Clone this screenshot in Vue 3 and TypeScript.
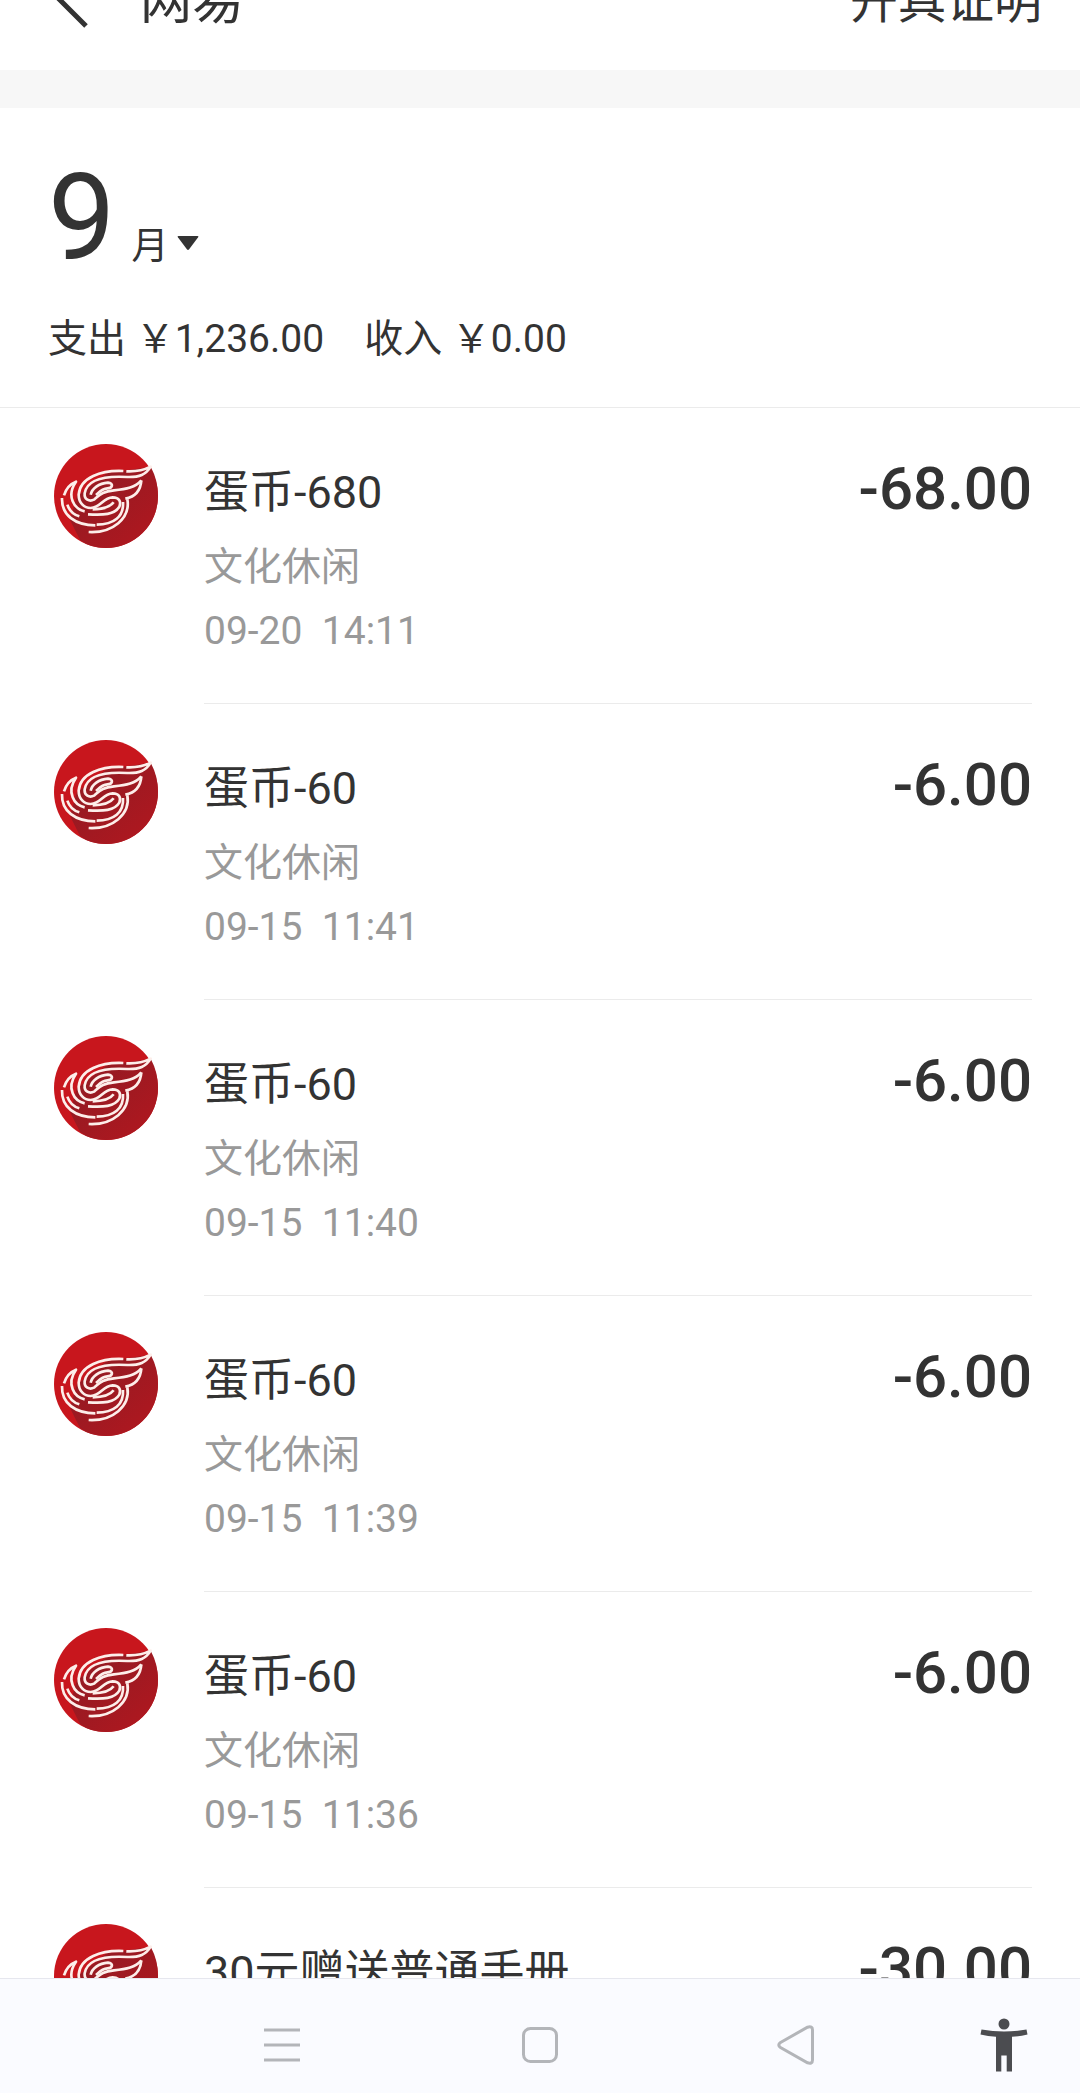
<script setup lang="ts">
interface Transaction {
  id: number
  title: string
  category: string
  time: string
  amount: string
}

const transactions: Transaction[] = [
  { id: 1, title: '蛋币-680', category: '文化休闲', time: '09-20  14:11', amount: '-68.00' },
  { id: 2, title: '蛋币-60', category: '文化休闲', time: '09-15  11:41', amount: '-6.00' },
  { id: 3, title: '蛋币-60', category: '文化休闲', time: '09-15  11:40', amount: '-6.00' },
  { id: 4, title: '蛋币-60', category: '文化休闲', time: '09-15  11:39', amount: '-6.00' },
  { id: 5, title: '蛋币-60', category: '文化休闲', time: '09-15  11:36', amount: '-6.00' },
  { id: 6, title: '30元赠送普通手册', category: '', time: '', amount: '-30.00' },
]
</script>

<template>
  <div class="screen">
    <header class="topbar">
      <button class="back" type="button" aria-label="返回">
        <svg width="34" height="60" viewBox="0 0 34 60" fill="none" stroke="#333" stroke-width="5">
          <path d="M32 2 4 30l28 28" />
        </svg>
      </button>
      <h1 class="merchant">网易</h1>
      <a class="proof" href="#">开具证明</a>
    </header>

    <section class="summary">
      <button class="month" type="button">
        <span class="month-number">9</span>
        <span class="month-unit">月</span>
        <svg class="caret" width="22" height="14" viewBox="0 0 22 14" fill="#333">
          <path d="M1.500 0h19q1.500 0 .6 1.300l-9 12q-1.100 1.200-2.200 0l-9-12Q0 0 1.500 0z" />
        </svg>
      </button>
      <p class="totals">
        <span>支出 ￥1,236.00</span>
        <span>收入 ￥0.00</span>
      </p>
    </section>

    <ul class="list">
      <li v-for="item in transactions" :key="item.id" class="row">
        <svg class="logo" width="104" height="104" viewBox="42 42 312 312" aria-hidden="true">
          <defs>
            <linearGradient :id="`shade-${item.id}`" x1="0" y1="0" x2="1" y2="1">
              <stop offset="0.3" stop-color="#981a22" />
              <stop offset="1" stop-color="#b3171f" />
            </linearGradient>
          </defs>
          <circle cx="198" cy="198" r="156" fill="#c8161d" />
          <path d="M110 200 200 130 332 110Q354 150 354 198A156 156 0 0 1 198 354Q150 354 120 330L90 270z" :fill="`url(#shade-${item.id})`" />
          <g transform="translate(54 96)" fill="none" stroke="#fdeeea" stroke-width="8" stroke-linejoin="round">
            <path d="M196 27C130 24 66 46 62 98C62 122 78 138 98 138C130 136 134 107 164 106C184 106 190 120 184 134C170 158 136 160 90 157" />
            <path d="M205 28C238 30 258 24 278 14C264 38 244 46 208 45C156 42 88 46 80 94C78 112 94 120 108 113C126 98 134 88 168 85C206 82 232 76 250 55" />
            <path d="M250 55C248 84 232 104 202 110" />
            <path d="M98 98C102 80 122 64 150 62C168 64 164 78 148 79C132 80 124 90 114 99" />
            <path d="M18 100C24 80 36 66 54 59C42 76 36 98 44 118C50 134 62 144 80 148" />
            <path d="M12 108C10 160 52 190 112 190" />
            <path d="M28 128C34 146 46 158 64 163" />
            <path d="M96 157M104 142C134 142 156 136 167 121" />
            <path d="M116 188C168 188 198 164 195 120" />
            <path d="M208 112C218 168 164 214 92 210" />
          </g>
        </svg>
        <div class="body">
          <div class="info">
            <h2 class="title">{{ item.title }}</h2>
            <p v-if="item.category" class="category">{{ item.category }}</p>
            <time v-if="item.time" class="time">{{ item.time }}</time>
          </div>
          <strong class="amount">{{ item.amount }}</strong>
        </div>
      </li>
    </ul>

    <nav class="navbar">
      <button type="button" aria-label="菜单">
        <svg width="36" height="36" viewBox="0 0 36 36" fill="none" stroke="#b3b5b9" stroke-width="3">
          <path d="M0 3h36M0 18h36M0 33h36" />
        </svg>
      </button>
      <button type="button" aria-label="主页">
        <svg width="36" height="36" viewBox="0 0 36 36" fill="none" stroke="#b3b5b9" stroke-width="3">
          <rect x="1.500" y="1.500" width="33" height="33" rx="7" />
        </svg>
      </button>
      <button type="button" aria-label="后退">
        <svg width="38" height="40" viewBox="0 0 38 40" fill="none" stroke="#b3b5b9" stroke-width="3">
          <path d="M3.500 17.500 30.500 2.200Q35.500.6 35.500 5v30q0 4.400-5 2.800L3.500 22.500q-3.500-2.500 0-5z" />
        </svg>
      </button>
      <button class="assist" type="button" aria-label="无障碍">
        <svg width="48" height="54" viewBox="0 0 48 54" fill="#4b4c50">
          <circle cx="24" cy="6" r="5.500" />
          <path d="M1.500 11.500Q24 15.500 46.500 11.500l1 5Q40 18.300 32 18.800V53.500h-5.300V37.500h-5.400v16H16V18.800Q8 18.300.5 16.500z" />
        </svg>
      </button>
    </nav>
  </div>
</template>

<style>
body {
  margin: 0;
  background: #fff;
}
</style>

<style scoped>
.screen {
  display: flex;
  flex-direction: column;
  height: 100vh;
  overflow: hidden;
  color: #333;
  background: #fff;
  font-family: Roboto, "Noto Sans CJK SC", sans-serif;
}

button {
  padding: 0;
  border: 0;
  background: none;
  color: inherit;
  font: inherit;
}

svg {
  display: block;
  flex: none;
}

h1,
h2,
p,
ul {
  margin: 0;
  padding: 0;
  font-weight: 400;
}

/* Scrolled partly out of view, so its content is anchored to the bottom edge */
.topbar {
  display: flex;
  flex: none;
  align-items: flex-end;
  box-sizing: border-box;
  height: 70px;
  padding: 0 38px 42px 54px;
  overflow: hidden;
}

.merchant {
  margin-left: 52px;
  font-size: 52px;
  line-height: 52px;
}

.proof {
  margin-left: auto;
  color: inherit;
  font-size: 48px;
  line-height: 52px;
  text-decoration: none;
}

.summary {
  flex: none;
  padding: 46px 48px 40px;
  border-top: 38px solid #f7f7f7;
  border-bottom: 1px solid #ebebeb;
}

.month {
  display: flex;
  align-items: baseline;
}

.month-number {
  font-size: 120px;
  line-height: 128px;
}

.month-unit {
  margin-left: 16px;
  font-size: 37px;
}

.caret {
  align-self: flex-end;
  margin: 0 0 32px 9px;
}

.totals {
  display: flex;
  gap: 40px;
  margin-top: 29px;
  font-size: 39px;
  line-height: 56px;
}

.list {
  flex: 1;
  min-height: 0;
  overflow: hidden;
  list-style: none;
}

.row {
  display: flex;
  gap: 46px;
  padding: 0 48px 0 54px;
}

.logo {
  margin-top: 36px;
}

.body {
  display: flex;
  flex: 1;
  justify-content: space-between;
  box-sizing: border-box;
  height: 296px;
  padding-top: 53px;
  border-bottom: 1px solid #ebebeb;
}

.title {
  font-size: 45px;
  line-height: 64px;
}

.category,
.time {
  display: block;
  color: #999;
  font-size: 39px;
  line-height: 64px;
  white-space: pre;
}

.category {
  margin-top: 10px;
}

.amount {
  font-size: 60px;
  font-weight: 500;
  line-height: 56px;
}

.navbar {
  display: grid;
  flex: none;
  grid-template-columns: 258fr 258fr 254fr 157fr;
  align-items: center;
  justify-items: center;
  box-sizing: border-box;
  height: 115px;
  padding: 18px 0 0 153px;
  border-top: 1px solid #e6e7ee;
  background: #fafbff;
}

.assist {
  justify-self: end;
  margin-right: 52px;
}
</style>
